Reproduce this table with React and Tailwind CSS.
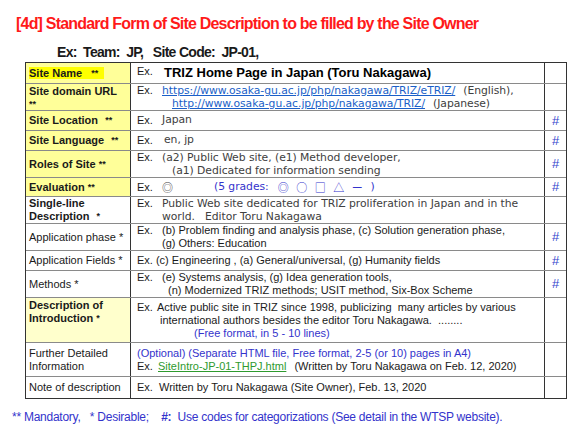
const hash = <span className="text-[#3344cc] text-[13px]">#</span>;

const Ex = ({ w = 'w-[25px]' }) => <span className={`ex ${w} shrink-0`}>Ex.</span>;

const grades = ['◎', '○', '□', '△', 'ー'];

const rows = [
  {
    h: 'h-[21px]',
    label: (
      <span className="bg-[#ffff00] pr-[6px]">
        Site Name&nbsp;&nbsp; <span className="text-[9px] align-top">**</span>
      </span>
    ),
    bg: 'bg-[#ffff99]',
    bold: true,
    content: (
      <div className="flex">
        <span className="w-[27px]">Ex.</span>
        <span className="font-bold text-[13px] text-black">TRIZ Home Page in Japan (Toru Nakagawa)</span>
      </div>
    ),
  },
  {
    h: 'h-[27px]',
    label: (
      <>
        Site domain URL
        <br />
        <span className="text-[9px] align-top">**</span>
      </>
    ),
    bg: 'bg-[#ffff99]',
    bold: true,
    align: 'items-start',
    content: (
      <div className="jp leading-[13px] text-[#404040]">
        <div className="flex">
          <Ex />
          <span className="text-[#1a5fc8] underline">https://www.osaka-gu.ac.jp/php/nakagawa/TRIZ/eTRIZ/</span>
          <span className="ml-2">(English),</span>
        </div>
        <div className="pl-[35px]">
          <span className="text-[#1a5fc8] underline">http://www.osaka-gu.ac.jp/php/nakagawa/TRIZ/</span>
          <span className="ml-2">(Japanese)</span>
        </div>
      </div>
    ),
  },
  {
    h: 'h-[20px]',
    label: (
      <>
        Site Location <span className="text-[9px] align-top ml-1">**</span>
      </>
    ),
    bg: 'bg-[#ffff99]',
    bold: true,
    hash: true,
    content: (
      <div className="jp flex text-[#404040]">
        <Ex />
        Japan
      </div>
    ),
  },
  {
    h: 'h-[20px]',
    label: (
      <>
        Site Language <span className="text-[9px] align-top ml-1">**</span>
      </>
    ),
    bg: 'bg-[#ffff99]',
    bold: true,
    hash: true,
    content: (
      <div className="jp flex text-[#404040]">
        <Ex w="w-[27px]" />
        en, jp
      </div>
    ),
  },
  {
    h: 'h-[27px]',
    label: (
      <>
        Roles of Site <span className="text-[9px] align-top">**</span>
      </>
    ),
    bg: 'bg-[#ffff99]',
    bold: true,
    hash: true,
    content: (
      <div className="jp leading-[13px] text-[#404040]">
        <div className="flex">
          <Ex />
          (a2) Public Web site, (e1) Method developer,
        </div>
        <div className="pl-[35px]">(a1) Dedicated for information sending</div>
      </div>
    ),
  },
  {
    h: 'h-[19px]',
    label: (
      <>
        Evaluation <span className="text-[9px] align-top">**</span>
      </>
    ),
    bg: 'bg-[#ffff99]',
    bold: true,
    hash: true,
    content: (
      <div className="jp flex items-center text-[#404040]">
        <Ex />
        <span className="sym w-[52px]">◎</span>
        <span className="text-[#3333cc] w-[60px]">(5 grades:</span>
        {grades.map(g => (
          <span key={g} className="sym text-[#3333cc] w-[18.5px] text-center">
            {g}
          </span>
        ))}
        <span className="text-[#3333cc] ml-[4px]">)</span>
      </div>
    ),
  },
  {
    h: 'h-[27px]',
    label: (
      <>
        Single-line
        <br />
        Description <span className="text-[9px] align-top ml-1">*</span>
      </>
    ),
    bold: true,
    content: (
      <div className="jp leading-[13px] text-[#404040]">
        <div className="flex">
          <Ex />
          Public Web site dedicated for TRIZ proliferation in Japan and in the
        </div>
        <div className="pl-[25px]">world.&nbsp;&nbsp; Editor Toru Nakagawa</div>
      </div>
    ),
  },
  {
    h: 'h-[27px]',
    label: 'Application phase *',
    hash: true,
    content: (
      <div className="leading-[13px]">
        <div className="flex">
          <span className="w-[25px]">Ex.</span>(b) Problem finding and analysis phase, (c) Solution generation phase,
        </div>
        <div className="pl-[25px]">(g) Others: Education</div>
      </div>
    ),
  },
  {
    h: 'h-[20px]',
    label: 'Application Fields *',
    hash: true,
    content: <div>Ex. (c) Engineering , (a) General/universal, (g) Humanity fields</div>,
  },
  {
    h: 'h-[27px]',
    label: 'Methods *',
    hash: true,
    content: (
      <div className="leading-[13px]">
        <div className="flex">
          <span className="w-[25px]">Ex.</span>(e) Systems analysis, (g) Idea generation tools,
        </div>
        <div className="pl-[31px]">(n) Modernized TRIZ methods; USIT method, Six-Box Scheme</div>
      </div>
    ),
  },
  {
    h: 'h-[45px]',
    label: (
      <>
        Description of
        <br />
        Introduction <span className="text-[9px] align-top">*</span>
      </>
    ),
    bg: 'bg-[#ffffcc]',
    bold: true,
    align: 'items-start',
    content: (
      <div className="leading-[13px]">
        <div className="flex">
          <span className="w-[20px]">Ex.</span>Active public site in TRIZ since 1998, publicizing&nbsp; many articles by various
        </div>
        <div className="pl-[23px]">international authors besides the editor Toru Nakagawa.&nbsp; ........</div>
        <div className="pl-[57px] text-[#3333cc]">(Free format, in 5 - 10 lines)</div>
      </div>
    ),
  },
  {
    h: 'h-[34px]',
    label: (
      <>
        Further Detailed
        <br />
        Information
      </>
    ),
    content: (
      <div className="leading-[13px]">
        <div className="text-[#3333cc]">(Optional) (Separate HTML file, Free format, 2-5 (or 10) pages in A4)</div>
        <div className="flex">
          <span className="w-[21px]">Ex.</span>
          <span className="text-[#2e9a2e] underline">SiteIntro-JP-01-THPJ.html</span>
          <span className="ml-2">(Written by Toru Nakagawa on Feb. 12, 2020)</span>
        </div>
      </div>
    ),
  },
  {
    h: 'h-[21px]',
    label: 'Note of description',
    content: <div>Ex.&nbsp; Written by Toru Nakagawa (Site Owner), Feb. 13, 2020</div>,
  },
];

export default function App() {
  return (
    <div className="w-[585px] h-[432px] bg-white font-['Liberation_Sans',Arial,sans-serif] text-[#1a1a1a]">
      <style>{`
        .jp{font-family:"DejaVu Sans","Noto Sans CJK JP",sans-serif;font-size:10.8px;letter-spacing:-0.05px;}
        .ex{font-family:"Liberation Sans",Arial,sans-serif;font-size:11px;color:#1a1a1a;letter-spacing:0;}
        .sym{font-family:"Noto Sans CJK JP",sans-serif;font-size:11px;line-height:13px;}
      `}</style>
      <div className="pt-[13px] pl-[16px] text-[16px] font-bold text-[#ff1a1a] leading-[21px] tracking-[-0.8px]">
        [4d] Standard Form of Site Description to be filled by the Site Owner
      </div>
      <div className="pt-[9px] pl-[57px] text-[14px] font-bold leading-[18px] tracking-[-0.7px] whitespace-pre">
        {'Ex:  Team:  JP,   Site Code:  JP-01,'}
      </div>
      <div className="ml-[25px] mt-[1px] w-[542px] border border-[#333] text-[11px]">
        {rows.map((r, i) => (
          <div
            key={i}
            className={`flex ${r.h} ${i < rows.length - 1 ? 'border-b border-[#8a8a8a]' : ''}`}
          >
            <div
              className={`w-[105px] shrink-0 border-r border-[#333] px-[3px] flex ${r.align || 'items-center'} leading-[13px] ${r.bg || ''} ${r.bold ? 'font-bold' : ''}`}
            >
              <div className={r.align ? 'pt-[1px]' : ''}>{r.label}</div>
            </div>
            <div className="w-[414px] shrink-0 border-r border-[#333] px-[6px] flex items-center whitespace-nowrap">
              {r.content}
            </div>
            <div className="flex-1 flex items-center justify-center">{r.hash ? hash : null}</div>
          </div>
        ))}
      </div>
      <div className="pt-[9px] pl-[12px] text-[12px] text-[#3333cc] whitespace-pre tracking-[-0.25px]">
        {'** Mandatory,   * Desirable;    '}
        <span className="font-bold">#:</span>
        {'  Use codes for categorizations (See detail in the WTSP website).'}
      </div>
    </div>
  );
}
